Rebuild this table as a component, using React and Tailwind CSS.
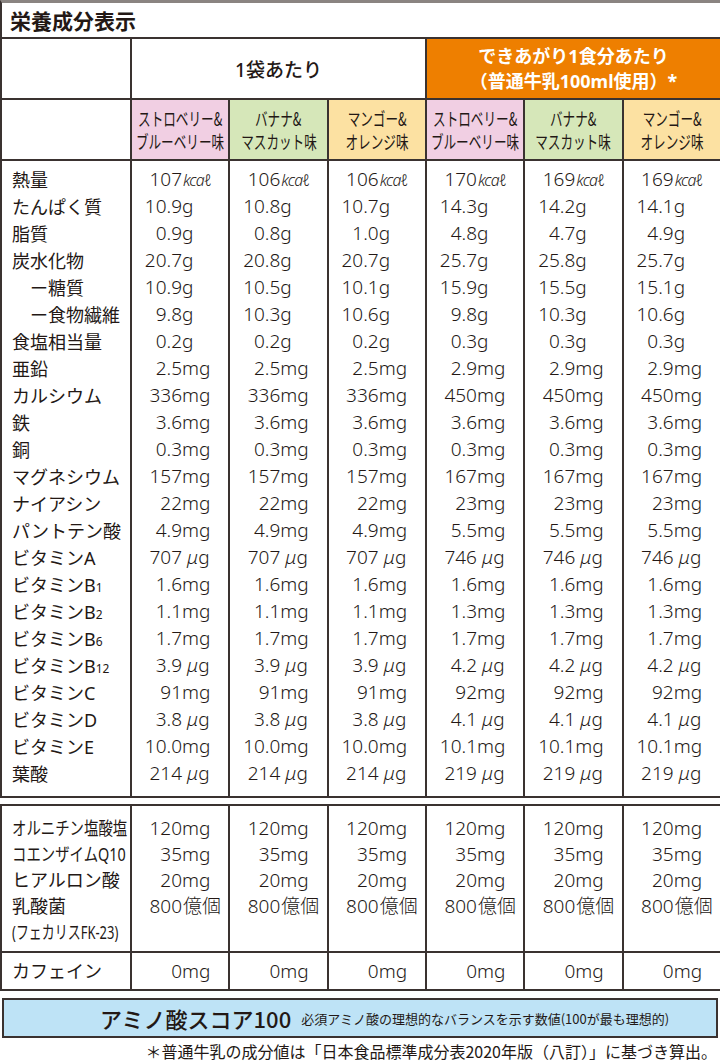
import React from "react";

const L = (label, vals, opts = {}) => ({ label, vals, ...opts });
const rep = (a, b) => [a, a, a, b, b, b];
const all = (a) => [a, a, a, a, a, a];

const mainRows = [
  L("熱量", ["107kcal", "106kcal", "106kcal", "170kcal", "169kcal", "169kcal"]),
  L("たんぱく質", ["10.9g", "10.8g", "10.7g", "14.3g", "14.2g", "14.1g"]),
  L("脂質", ["0.9g", "0.8g", "1.0g", "4.8g", "4.7g", "4.9g"]),
  L("炭水化物", ["20.7g", "20.8g", "20.7g", "25.7g", "25.8g", "25.7g"]),
  L("ー糖質", ["10.9g", "10.5g", "10.1g", "15.9g", "15.5g", "15.1g"], { indent: true }),
  L("ー食物繊維", ["9.8g", "10.3g", "10.6g", "9.8g", "10.3g", "10.6g"], { indent: true }),
  L("食塩相当量", rep("0.2g", "0.3g")),
  L("亜鉛", rep("2.5mg", "2.9mg")),
  L("カルシウム", rep("336mg", "450mg")),
  L("鉄", all("3.6mg")),
  L("銅", all("0.3mg")),
  L("マグネシウム", rep("157mg", "167mg")),
  L("ナイアシン", rep("22mg", "23mg")),
  L("パントテン酸", rep("4.9mg", "5.5mg")),
  L("ビタミンA", rep("707μg", "746μg")),
  L("ビタミンB", all("1.6mg"), { sub: "1" }),
  L("ビタミンB", rep("1.1mg", "1.3mg"), { sub: "2" }),
  L("ビタミンB", all("1.7mg"), { sub: "6" }),
  L("ビタミンB", rep("3.9μg", "4.2μg"), { sub: "12" }),
  L("ビタミンC", rep("91mg", "92mg")),
  L("ビタミンD", rep("3.8μg", "4.1μg")),
  L("ビタミンE", rep("10.0mg", "10.1mg")),
  L("葉酸", rep("214μg", "219μg")),
];

const subRows = [
  L("オルニチン塩酸塩", all("120mg"), { cond: "scale-x-[0.8]" }),
  L("コエンザイムQ10", all("35mg"), { cond: "scale-x-[0.8]" }),
  L("ヒアルロン酸", all("20mg")),
  L("乳酸菌", all("800億個")),
  L("(フェカリスFK-23)", all(""), { cond: "scale-x-[0.72]" }),
];

const flavors = [
  { l1: "ストロベリー&", l2: "ブルーベリー味", bg: "bg-[#f1cfe3]" },
  { l1: "バナナ&", l2: "マスカット味", bg: "bg-[#d6e7b9]" },
  { l1: "マンゴー&", l2: "オレンジ味", bg: "bg-[#fce1a2]" },
];

function Unit({ u }) {
  if (u === "kcal")
    return (
      <span className="ml-[1px] italic text-[16px] tracking-[-0.8px]">kcaℓ</span>
    );
  if (u === "μg")
    return (
      <span className="ml-[5px]">
        <i>μ</i>g
      </span>
    );
  if (u === "億個") return <span className="ml-[1px] text-[19px]">億個</span>;
  return <span>{u}</span>;
}

function Value({ v, h }) {
  const m = v.match(/^([\d.]+)(.*)$/);
  return (
    <div className={`${h} flex items-center whitespace-nowrap font-light`}>
      {m ? (
        <>
          <span className="w-[50px] shrink-0 text-right">{m[1]}</span>
          <Unit u={m[2]} />
        </>
      ) : null}
    </div>
  );
}

function Label({ r, h }) {
  return (
    <div className={`${h} flex items-center whitespace-nowrap pl-[10px] text-[18px]`}>
      {r.indent ? <span className="ml-[18px]" /> : null}
      {r.cond ? (
        <span className={`inline-block origin-left ${r.cond}`}>{r.label}</span>
      ) : (
        <span>
          {r.label}
          {r.sub ? <span className="text-[12px]">{r.sub}</span> : null}
        </span>
      )}
    </div>
  );
}

function Section({ rows, h, pt, pb }) {
  return (
    <div className="flex">
      <div className={`w-[128px] shrink-0 ${pt} ${pb}`}>
        {rows.map((r, i) => (
          <Label key={i} r={r} h={h} />
        ))}
      </div>
      {[0, 1, 2, 3, 4, 5].map((c) => (
        <div key={c} className={`flex-1 min-w-0 border-l-2 border-[#3a3230] ${pt} ${pb}`}>
          {rows.map((r, i) => (
            <Value key={i} v={r.vals[c]} h={h} />
          ))}
        </div>
      ))}
    </div>
  );
}

export default function App() {
  const font = "font-['Noto_Sans','Noto_Sans_CJK_JP',sans-serif]";
  return (
    <div className={`w-[720px] h-[1061px] overflow-hidden bg-white text-[#231815] ${font} text-[19px] leading-none`}>
      {/* main table */}
      <div className="border-t-[3px] border-t-[#8a8481] border-l-2 border-l-[#3a3230]">
        <div className="h-[36px] border-b-2 border-[#3a3230] flex items-center pl-[8px] text-[21px] font-bold">
          <span className="font-['Noto_Sans_CJK_JP',sans-serif]">栄養成分表示</span>
        </div>
        <div className="flex h-[61px] border-b-2 border-[#3a3230]">
          <div className="w-[128px] shrink-0" />
          <div className="flex-[3] min-w-0 border-l-2 border-[#3a3230] flex items-center justify-center pt-[3px] text-[19px] font-medium">
            1袋あたり
          </div>
          <div className="flex-[3] min-w-0 border-l-2 border-[#3a3230] bg-[#ee7f00] text-white font-bold text-[18px] flex flex-col items-center justify-center leading-[25px]">
            <span>できあがり1食分あたり</span>
            <span>（普通牛乳100ml使用）*</span>
          </div>
        </div>
        <div className="flex h-[61px] border-b-2 border-[#3a3230]">
          <div className="w-[128px] shrink-0" />
          {[...flavors, ...flavors].map((f, i) => (
            <div
              key={i}
              className={`flex-1 min-w-0 border-l-2 border-[#3a3230] ${f.bg} flex flex-col items-center justify-center text-[18px] leading-[23px] font-['Noto_Sans_CJK_JP',sans-serif]`}
            >
              <span className="whitespace-nowrap scale-x-[0.7] inline-block">{f.l1}</span>
              <span className="whitespace-nowrap scale-x-[0.7] inline-block">{f.l2}</span>
            </div>
          ))}
        </div>
        <div className="border-b-2 border-[#3a3230]">
          <Section rows={mainRows} h="h-[27px]" pt="pt-[5px]" pb="pb-[9px]" />
        </div>
      </div>

      {/* supplements table */}
      <div className="mt-[6px] border-t-2 border-l-2 border-[#3a3230]">
        <div className="border-b-2 border-[#3a3230]">
          <Section rows={subRows} h="h-[26px]" pt="pt-[9px]" pb="pb-[6px]" />
        </div>
        <div className="border-b-2 border-[#3a3230]">
          <Section rows={[L("カフェイン", all("0mg"))]} h="h-[36px]" pt="pt-0" pb="pb-0" />
        </div>
      </div>

      {/* amino acid score */}
      <div className="mt-[7px] mx-[2px] h-[40px] border-2 border-[#3a3230] bg-[#bee3f6] flex items-center pl-[96px] whitespace-nowrap">
        <span className="text-[22px] font-medium font-['Noto_Sans_CJK_JP',sans-serif]">アミノ酸スコア100</span>
        <span className="ml-[10px] text-[13px] font-['Noto_Sans_CJK_JP',sans-serif]">
          必須アミノ酸の理想的なバランスを示す数値(100が最も理想的)
        </span>
      </div>

      {/* footnote */}
      <div className="mt-[4px] pr-[3px] text-right text-[16px] leading-[18px] whitespace-nowrap font-['Noto_Sans_CJK_JP',sans-serif]">
        ＊普通牛乳の成分値は「日本食品標準成分表2020年版（八訂）」に基づき算出。
      </div>
    </div>
  );
}
